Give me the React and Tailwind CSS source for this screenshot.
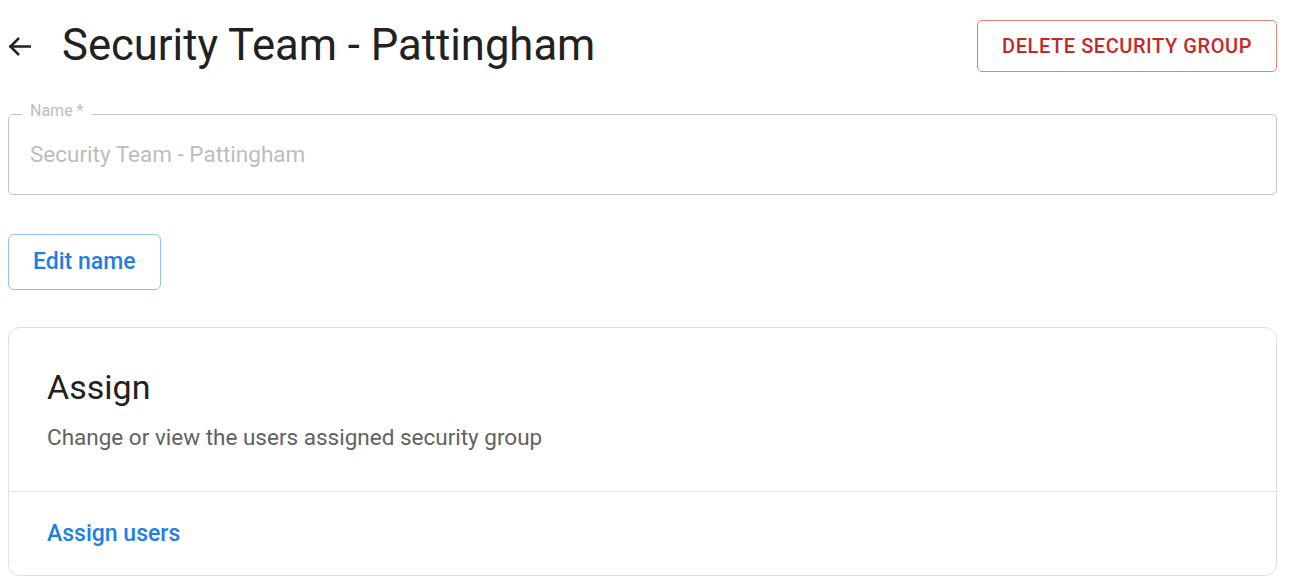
import React from "react";

// Security group detail — header with delete action, name field, assign card
function BackArrow() {
  return (
    <svg width="23" height="21" viewBox="0 0 23 21" fill="none" stroke="#212121" strokeWidth="2.5" strokeLinecap="square">
      <path d="M2.5 10.5H22" />
      <path d="M11 2L2.5 10.5L11 19" strokeLinecap="butt" />
    </svg>
  );
}

export default function App() {
  return (
    <div className="min-h-screen bg-white pl-[8px] pr-[16px] pt-[20px] font-['Roboto',sans-serif] text-[#212121]">
      <div className="flex items-center justify-between">
        <div className="flex items-center">
          <button className="flex items-center">
            <BackArrow />
          </button>
          <h1 className="ml-[31px] text-[43.6px] font-normal leading-[52px]">Security Team - Pattingham</h1>
        </div>
        <button className="h-[52px] rounded-[5px] border border-[#e57f73] px-[24px] text-[20px] font-medium uppercase tracking-[0.57px] text-[#c62828]">
          Delete security group
        </button>
      </div>

      <div className="relative mt-[42px] flex h-[81px] items-center rounded-[5px] border border-[#c4c4c4] pl-[21px]">
        <span className="absolute left-[13px] top-[-12px] bg-white px-[8px] text-[16px] leading-[16px] text-[#bdbdbd]">Name *</span>
        <span className="text-[22.5px] text-[#bdbdbd]">Security Team - Pattingham</span>
      </div>

      <button className="mt-[39px] h-[56px] rounded-[6px] border border-[#90c2f5] px-[24px] text-[23px] font-medium text-[#1e7ee6]">
        Edit name
      </button>

      <div className="mt-[37px] rounded-[12px] border border-[#e0e0e0]">
        <div className="border-b border-[#e0e0e0] px-[38px] pb-[40px] pt-[39px]">
          <h2 className="text-[34px] font-normal leading-[40px] text-[#212121]">Assign</h2>
          <p className="mt-[16px] text-[22.5px] leading-[28px] text-[#616161]">Change or view the users assigned security group</p>
        </div>
        <div className="flex h-[83px] items-center px-[38px]">
          <button className="text-[23px] font-medium leading-[28px] text-[#1e7ee6]">Assign users</button>
        </div>
      </div>
    </div>
  );
}
